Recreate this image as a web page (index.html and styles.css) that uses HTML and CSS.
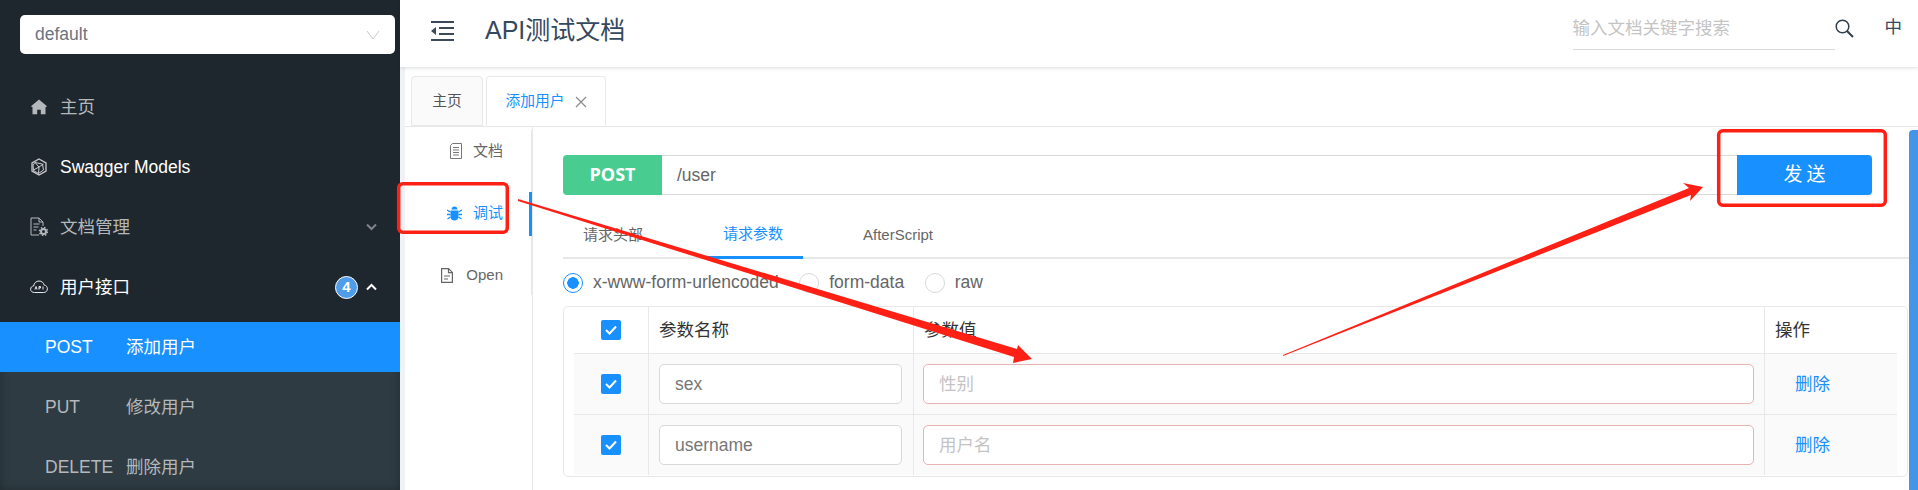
FILE: index.html
```html
<!DOCTYPE html>
<html lang="zh">
<head>
<meta charset="utf-8">
<title>API测试文档</title>
<link rel="stylesheet" href="styles.css">
</head>
<body>
<div class="app">
  <aside class="sidebar">
    <div class="select">
      <span>default</span>
      <svg class="select-arrow" width="14" height="10" viewBox="0 0 14 10"><path d="M1 1l6 8 6-8" fill="none" stroke="#c4c8cc" stroke-width="1"/></svg>
    </div>
    <nav class="menu">
      <div class="menu-item">
        <svg class="menu-icon" width="18" height="18" viewBox="0 0 18 18"><path d="M9 1.5L1 8.2l.9.9H2.5v7.2h4.7v-4.6h3.6v4.6h4.7V9.100h.6l.9-.9z" fill="#b4b8bb"/></svg>
        <span>主页</span>
      </div>
      <div class="menu-item is-bright">
        <svg class="menu-icon" width="18" height="18" viewBox="0 0 18 18" fill="none" stroke="#c9cbcd" stroke-width="1"><path d="M9 1l7 4v8l-7 4-7-4V5z" stroke-width="1.300"/><path d="M5 4.500l7.500 1.500 1 6-5 3.500-5-3-.5-5.500zM5 4.500L9 9l4.500-3M9 9l-.500 6.500M3.500 12L9 9"/></svg>
        <span>Swagger Models</span>
      </div>
      <div class="menu-item">
        <svg class="menu-icon" width="18" height="20" viewBox="0 0 18 20" fill="none" stroke="#b4b8bb" stroke-width="1"><path d="M9 18H1V1h8l4 4v4"/><path d="M9 1v4h4M3.500 7h6M3.500 10h5M3.500 13h3" /><circle cx="13.500" cy="14.500" r="2.500" stroke-width="2"/><circle cx="13.500" cy="14.500" r="4" stroke-dasharray="1.500 1.640" stroke-width="1.500"/></svg>
        <span>文档管理</span>
        <svg class="menu-caret" width="11" height="8" viewBox="0 0 11 8"><path d="M1 1.500l4.500 4.500 4.500-4.500" fill="none" stroke="#7f8589" stroke-width="2"/></svg>
      </div>
      <div class="menu-item is-bright">
        <svg class="menu-icon" width="18" height="14" viewBox="0 0 18 14" fill="none" stroke="#e8e9ea" stroke-width="1"><path d="M4.500 12.500C2 12.500.6 11 .6 9.200c0-1.800 1.300-3 3-3.200C4 3 6.300 1 9 1c2.600 0 4.600 1.600 5.100 4 2 .3 3.300 1.900 3.300 3.800 0 2.100-1.500 3.700-3.700 3.700z"/><path d="M5 9.500l1-3 1 3M9 9.500V6.500h1.500v1.500H9M13 6.500v3"/></svg>
        <span>用户接口</span>
        <span class="badge">4</span>
        <svg class="menu-caret is-open" width="11" height="8" viewBox="0 0 11 8"><path d="M1 6.500l4.500-4.500 4.500 4.500" fill="none" stroke="#fff" stroke-width="2"/></svg>
      </div>
      <div class="submenu">
        <div class="sub-item is-active"><span class="method">POST</span><span>添加用户</span></div>
        <div class="sub-item"><span class="method">PUT</span><span>修改用户</span></div>
        <div class="sub-item"><span class="method">DELETE</span><span>删除用户</span></div>
      </div>
    </nav>
  </aside>

  <main class="main">
    <header class="topbar">
      <svg class="fold" width="23" height="20" viewBox="0 0 23 20"><path d="M0 0h23v2H0zM0 18h23v2H0zM8 6h15v2H8zM8 12h15v2H8zM0 10l5-4v8z" fill="#3c4a57"/></svg>
      <h1 class="title">API测试文档</h1>
      <div class="search">输入文档关键字搜索</div>
      <svg class="search-icon" width="19" height="19" viewBox="0 0 19 19" fill="none" stroke="#2f3d4c"><circle cx="7.500" cy="7.500" r="6.300" stroke-width="1.500"/><path d="M12 12l6 6" stroke-width="2"/></svg>
      <span class="lang">中</span>
    </header>

    <div class="page">
      <div class="tabs">
        <div class="tab">主页</div>
        <div class="tab is-current"><span>添加用户</span>
          <svg width="12" height="12" viewBox="0 0 12 12"><path d="M1 1l10 10M11 1L1 11" stroke="#8c8c8c" stroke-width="1.200"/></svg>
        </div>
      </div>

      <div class="workspace">
        <div class="sidenav">
          <div class="sidenav-list">
            <div class="sidenav-item">
              <svg width="12" height="16" viewBox="0 0 12 16" fill="none" stroke="#777"><path d="M2.500.5h9v15H.5V2.500zM3 4.500h6M3 7h6M3 9.500h6M3 12h6"/></svg>
              <span>文档</span>
            </div>
            <div class="sidenav-item is-selected">
              <svg width="15" height="15" viewBox="0 0 15 15" fill="#1890ff"><path d="M4.500 3.500C4.500 1.800 5.800.5 7.500.5s3 1.300 3 3zM3.500 4.500h8v6c0 2.400-1.700 4-4 4s-4-1.600-4-4z"/><path d="M0 4l3.500 2M15 4l-3.500 2M0 8.500h3.500M15 8.500h-3.500M.5 13l3-2M14.500 13l-3-2" stroke="#1890ff" stroke-width="1.300"/></svg>
              <span>调试</span>
            </div>
            <div class="sidenav-item">
              <svg class="open-icon" width="12" height="15" viewBox="0 0 12 15" fill="none" stroke="#666" stroke-width="1.200"><path d="M.6.600h7l3.800 3.800v10H.6zM7.500.600v4h4M3 8h6M3 11h4"/></svg>
              <span>Open</span>
            </div>
          </div>
        </div>

        <div class="content">
          <div class="urlbar">
            <div class="verb">POST</div>
            <div class="url">/user</div>
            <div class="send">发送</div>
          </div>

          <div class="subtabs">
            <div class="subtab">请求头部</div>
            <div class="subtab is-on">请求参数</div>
            <div class="subtab">AfterScript</div>
          </div>

          <div class="radios">
            <span class="radio is-checked"></span><span class="radio-label">x-www-form-urlencoded</span>
            <span class="radio"></span><span class="radio-label">form-data</span>
            <span class="radio"></span><span class="radio-label">raw</span>
          </div>

          <div class="table">
            <div class="row is-head">
              <div class="cell is-check"><span class="check"><svg width="12" height="10" viewBox="0 0 12 10"><path d="M1 5l3.500 3.500L11 1.500" fill="none" stroke="#fff" stroke-width="2"/></svg></span></div>
              <div class="cell">参数名称</div>
              <div class="cell">参数值</div>
              <div class="cell">操作</div>
            </div>
            <div class="row">
              <div class="cell is-check"><span class="check"><svg width="12" height="10" viewBox="0 0 12 10"><path d="M1 5l3.500 3.500L11 1.500" fill="none" stroke="#fff" stroke-width="2"/></svg></span></div>
              <div class="cell is-name"><div class="field">sex</div></div>
              <div class="cell is-value"><div class="field is-error">性别</div></div>
              <div class="cell is-action">删除</div>
            </div>
            <div class="row">
              <div class="cell is-check"><span class="check"><svg width="12" height="10" viewBox="0 0 12 10"><path d="M1 5l3.500 3.500L11 1.500" fill="none" stroke="#fff" stroke-width="2"/></svg></span></div>
              <div class="cell is-name"><div class="field">username</div></div>
              <div class="cell is-value"><div class="field is-error">用户名</div></div>
              <div class="cell is-action">删除</div>
            </div>
          </div>
        </div>

        <div class="scrollbar"></div>
      </div>
    </div>
  </main>
</div>

<svg class="annotations" width="1918" height="490" viewBox="0 0 1918 490">
  <rect x="398.700" y="183.700" width="108.600" height="48.600" rx="4" fill="none" stroke="#ff2015" stroke-width="3.500"/>
  <rect x="1718.700" y="130.700" width="166.600" height="74.600" rx="4" fill="none" stroke="#ff2015" stroke-width="3.500"/>
  <polygon points="518,199 1017,349 1018,345 1032,359 1013,363 1014,357 518,201" fill="#ff2015"/>
  <polygon points="1283,355 1689,188 1683,183 1703,187 1690,201 1691,195 1283,356" fill="#ff2015"/>
</svg>
</body>
</html>
```
FILE: styles.css
```css
* { box-sizing: border-box; }

html, body {
  margin: 0;
  height: 490px;
  overflow: hidden;
  background: #fff;
  font-family: "Liberation Sans", "Noto Sans CJK SC", sans-serif;
  font-size: 17.5px;
  line-height: 1.2;
  color: #666;
}

.app { display: flex; height: 490px; }

/* Sidebar */
.sidebar {
  flex: 0 0 400px;
  height: 490px;
  overflow: hidden;
  background: #1f272e;
  color: #b4b8bb;
}
.select {
  display: flex;
  align-items: center;
  justify-content: space-between;
  width: 375px;
  height: 39px;
  margin: 15px 0 0 20px;
  padding: 0 15px;
  border-radius: 5px;
  background: #fff;
  color: #6b7480;
  font-size: 17.5px;
}
.menu { margin-top: 23px; }
.menu-item {
  display: flex;
  align-items: center;
  height: 60px;
  padding-left: 30px;
}
.menu-item.is-bright { color: #fff; }
.menu-icon { flex: 0 0 auto; margin-right: 12px; }
.menu-caret { margin-left: auto; margin-right: 23px; }
.menu-caret.is-open { margin-left: 0; }
.badge {
  display: flex;
  align-items: center;
  justify-content: center;
  width: 23px;
  height: 23px;
  margin-left: auto;
  margin-right: 8px;
  border: 1px solid #fff;
  border-radius: 50%;
  background: #4f9de8;
  color: #fff;
  font-size: 15px;
  font-weight: 700;
}
.submenu {
  height: 168px;
  margin-top: 5px;
  background: #2f3b43;
  box-shadow: inset 0 0 10px rgba(0, 0, 0, .3);
}
.sub-item {
  display: flex;
  align-items: center;
  height: 50px;
  margin-bottom: 10px;
  padding-left: 45px;
}
.sub-item.is-active { background: #1890ff; color: #fff; }
.method { flex: 0 0 81px; }

/* Main column */
.main { flex: 1 1 auto; min-width: 0; display: flex; flex-direction: column; }
.topbar {
  position: relative;
  display: flex;
  align-items: center;
  flex: 0 0 67px;
  padding-left: 31px;
  background: #fff;
  box-shadow: 0 1px 4px rgba(0, 21, 41, .14);
}
.fold { flex: 0 0 auto; margin-top: -6px; }
.title {
  margin: -7px 0 0 31px;
  font-size: 25px;
  font-weight: 400;
  color: #35495e;
}
.search {
  display: flex;
  align-items: center;
  width: 262px;
  height: 42px;
  margin: -9px 0 0 auto;
  border-bottom: 1px solid #d9d9d9;
  color: #c4c4c4;
}
.search-icon { margin: -11px 0 0 0; }
.lang { margin: -12px 16px 0 31px; color: #35495e; }

.page {
  flex: 1 1 auto;
  min-height: 0;
  margin-left: 5px;
  padding-top: 9px;
  background: #fff;
  box-shadow: -5px 0 0 #f0f2f5;
  display: flex;
  flex-direction: column;
}
.tabs {
  display: flex;
  flex: 0 0 50px;
  gap: 3px;
  padding-left: 6px;
  border-bottom: 1px solid #e8e8e8;
}
.tab {
  display: flex;
  align-items: center;
  justify-content: center;
  gap: 10px;
  width: 72px;
  height: 50px;
  padding-top: 2px;
  border: 1px solid #e8e8e8;
  border-radius: 4px 4px 0 0;
  background: #fafafa;
  color: #555;
  font-size: 14.800px;
}
.tab.is-current {
  width: 120px;
  border-bottom-color: #fff;
  background: #fff;
  color: #1890ff;
}

.workspace { flex: 1 1 auto; display: flex; min-height: 0; }
.sidenav {
  flex: 0 0 128px;
  padding-top: 3px;
  border-right: 1px solid #e8e8e8;
}
.sidenav-list { height: 165px; margin-right: -1px; border-right: 2px solid #e8e8e8; }
.sidenav-item {
  position: relative;
  display: flex;
  align-items: center;
  justify-content: flex-end;
  gap: 11px;
  height: 40px;
  margin-bottom: 22px;
  padding: 2px 28px 0 0;
  color: #666;
  font-size: 15px;
}
.sidenav-item.is-selected { color: #1890ff; }
.sidenav-item.is-selected::after {
  content: "";
  position: absolute;
  top: 0;
  right: -1px;
  width: 3px;
  height: 44px;
  background: #1890ff;
}
.open-icon { margin-right: 2px; }

.content { flex: 1 1 auto; min-width: 0; padding-left: 30px; }
.urlbar { display: flex; height: 40px; margin: 28px 37px 0 0; }
.verb {
  flex: 0 0 99px;
  display: flex;
  align-items: center;
  justify-content: center;
  border-radius: 4px 0 0 4px;
  background: #49cc90;
  color: #fff;
  font-family: "Open Sans", "Liberation Sans", sans-serif;
  font-size: 18px;
  font-weight: 700;
}
.url {
  flex: 1 1 auto;
  display: flex;
  align-items: center;
  padding-left: 15px;
  border-top: 1px solid #d9d9d9;
  border-bottom: 1px solid #d9d9d9;
  color: #666;
}
.send {
  flex: 0 0 135px;
  display: flex;
  align-items: center;
  justify-content: center;
  padding-left: 4px;
  border-radius: 0 4px 4px 0;
  background: #1890ff;
  color: #fff;
  font-size: 19px;
  letter-spacing: 4px;
  box-shadow: 0 2px 0 rgba(0, 0, 0, .03);
}

.subtabs {
  display: flex;
  gap: 40px;
  height: 64px;
  border-bottom: 2px solid #e8e8e8;
}
.subtab {
  display: flex;
  align-items: center;
  height: 64px;
  padding: 16px 20px 0;
  color: #666;
  font-size: 15px;
}
.subtab.is-on { width: 100px; border-bottom: 3px solid #1890ff; color: #1890ff; }

.radios { display: flex; align-items: center; height: 47px; }
.radio {
  flex: 0 0 20px;
  width: 20px;
  height: 20px;
  border: 1px solid #d9d9d9;
  border-radius: 50%;
  background: #fff;
}
.radio.is-checked {
  border-color: #1890ff;
  background: radial-gradient(circle, #1890ff 0 5.500px, #fff 6px);
}
.radio-label { margin: 0 20.500px 0 10px; color: #666; }

.table {
  width: 1345px;
  height: 171px;
  padding: 0 10px 1px;
  border: 1px solid #e8e8e8;
  border-radius: 5px;
}
.row {
  display: grid;
  grid-template-columns: 75px 265px 851px 1fr;
  height: 61px;
  background: #fafafa;
  border-bottom: 1px solid #e8e8e8;
}
.row:last-child { height: 60px; border-bottom: 0; }
.row.is-head { height: 47px; background: #fff; color: #333; }
.cell {
  display: flex;
  align-items: center;
  padding-left: 10px;
  border-right: 1px solid #e8e8e8;
}
.cell:last-child { border-right: 0; }
.cell.is-check { justify-content: center; padding: 0; }
.cell.is-name { padding-right: 11px; }
.cell.is-value { padding: 0 10px 0 9px; }
.cell.is-action { padding-left: 30px; color: #1890ff; }
.check {
  display: flex;
  align-items: center;
  justify-content: center;
  width: 20px;
  height: 20px;
  border-radius: 2px;
  background: #1890ff;
}
.field {
  display: flex;
  align-items: center;
  width: 100%;
  height: 40px;
  padding-left: 15px;
  border: 1px solid #d9d9d9;
  border-radius: 5px;
  background: #fff;
  color: #777;
}
.field.is-error { border-color: #e9b3b3; color: #c4c4c4; }

.scrollbar {
  flex: 0 0 9px;
  margin-top: 3px;
  border-radius: 4px 0 0 0;
  background: #4395e6;
}

/* Hand-drawn review marks lying over the screenshot */
.annotations { position: absolute; top: 0; left: 0; pointer-events: none; }
```
